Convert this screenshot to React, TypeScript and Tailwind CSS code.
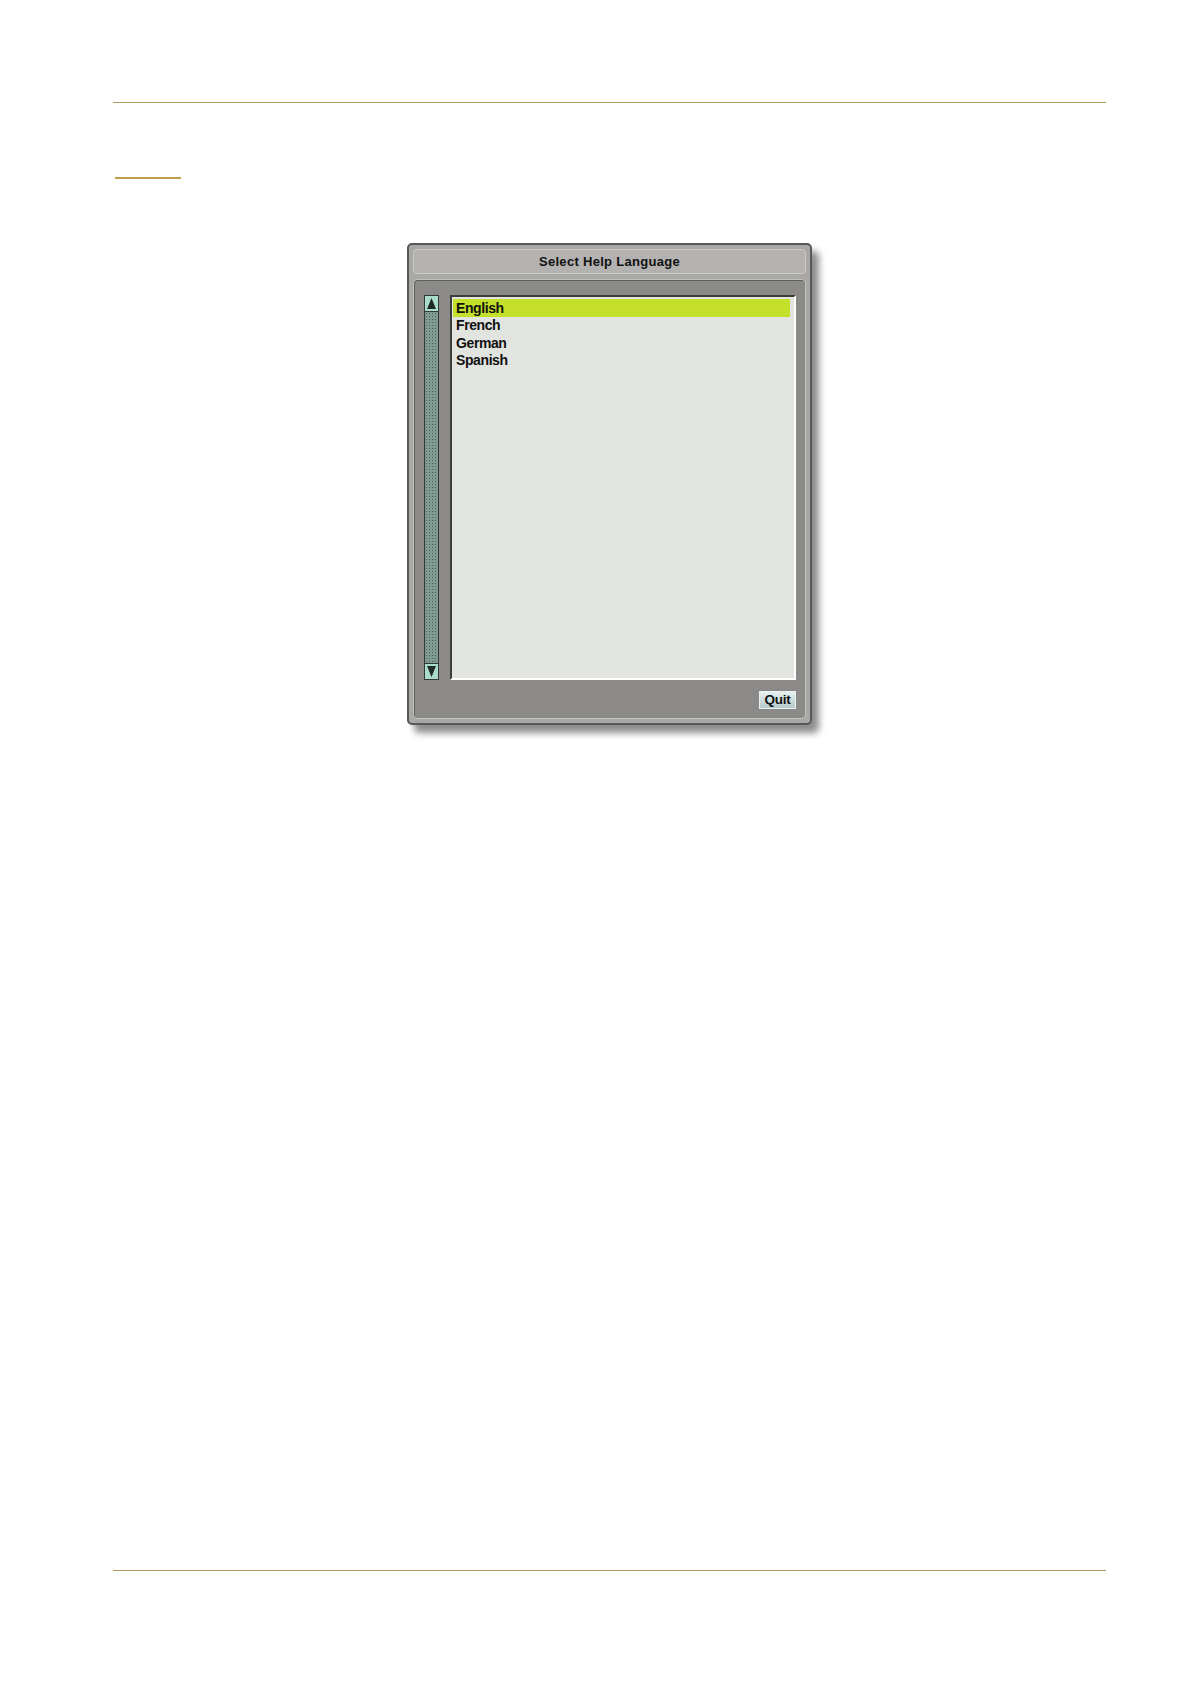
import React, { useState } from 'react';

const languages = ['English', 'French', 'German', 'Spanish'];

const font = { fontFamily: '"Liberation Sans", Arial, sans-serif' };

const Arrow: React.FC<{ up?: boolean }> = ({ up }) => (
  <svg width="9" height="11" viewBox="0 0 9 11">
    {up ? <polygon points="4.5,0 9,11 0,11" fill="#1e2a28" /> : <polygon points="0,0 9,0 4.5,11" fill="#1e2a28" />}
  </svg>
);

const ScrollBar: React.FC = () => (
  <div className="flex w-[15px] h-[385px] flex-col border border-[#2f3a37] bg-[#7f9892]">
    <div className="flex h-[16px] items-center justify-center border-b border-[#2f3a37] bg-[#a9dccd]">
      <Arrow up />
    </div>
    <div className="flex-1 bg-[#7f9b94] bg-[radial-gradient(circle,#4a645d_0.9px,transparent_1px)] bg-[length:3px_3px]" />
    <div className="flex h-[16px] items-center justify-center border-t border-[#2f3a37] bg-[#a9dccd]">
      <Arrow />
    </div>
  </div>
);

const App: React.FC = () => {
  const [selected, setSelected] = useState('English');

  return (
    <div className="flex min-h-[1684px] w-[1191px] flex-col bg-white" style={font}>
      <div className="ml-[113px] mt-[102px] h-px w-[993px] bg-[#b59a5e]" />
      <div className="ml-[115px] mt-[74px] h-[2px] w-[66px] bg-[#c29a52]" />

      {/* dialog */}
      <div className="ml-[407px] mt-[64px] w-[405px] rounded-[5px] border-2 border-[#585856] bg-[#a9a8a6] p-[4px] shadow-[7px_8px_7px_rgba(0,0,0,0.45)]">
        <div className="flex h-[25px] items-center justify-center rounded-[4px] border border-[#cbcac8] bg-[#b3b2b0] pt-[1px] text-[13px] font-bold tracking-[0.3px] text-[#111]">
          Select Help Language
        </div>

        <div className="mt-[5px] flex flex-col rounded-[4px] border border-[#c2c2c0] bg-[#8b8a88] pb-[9px] pl-[10px] pr-[9px] pt-[15px] shadow-[inset_1px_1px_0_#5f5f5d]">
          <div className="flex gap-[11px]">
            <ScrollBar />
            <div className="h-[385px] flex-1 border-b-2 border-l-2 border-r-2 border-t-2 border-b-white border-l-[#3c3c3a] border-r-white border-t-[#3c3c3a] bg-[#e2e4df] pl-[1px] pr-[4px] pt-[2px]">
              {languages.map(lang => (
                <div
                  key={lang}
                  onClick={() => setSelected(lang)}
                  className={`flex h-[17.5px] items-center pl-[3px] text-[14px] font-bold leading-none tracking-[-0.4px] text-[#111] ${selected === lang ? 'bg-[#c4e028]' : ''}`}
                >
                  {lang}
                </div>
              ))}
            </div>
          </div>

          <div className="mt-[11px] flex justify-end">
            <button className="flex h-[18px] w-[37px] items-center justify-center border border-[#e8f0f0] bg-gradient-to-b from-[#e6f0f0] to-[#b7cbcb] text-[13.5px] font-bold leading-none tracking-[-0.2px] text-[#111]">
              Quit
            </button>
          </div>
        </div>
      </div>

      <div className="mb-[113px] ml-[113px] mt-auto h-px w-[993px] bg-[#b59a5e]" />
    </div>
  );
};

export default App;
